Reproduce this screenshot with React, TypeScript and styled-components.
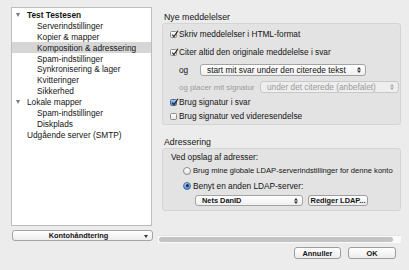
import React from "react";
import styled, { createGlobalStyle } from "styled-components";

const GlobalStyle = createGlobalStyle`
  html, body {
    margin: 0;
    padding: 0;
    background: #ececec;
  }
  body {
    font-family: "Liberation Sans", Arial, sans-serif;
    font-size: 8.3px;
    color: #141414;
  }
`;

const Window = styled.div`
  width: 409px;
  height: 270px;
  box-sizing: border-box;
  padding: 7px 0 0 11px;
  display: flex;
  flex-direction: column;
  overflow: hidden;
`;

const Main = styled.div`
  display: flex;
  height: 236px;
  gap: 5px;
`;

const Sidebar = styled.div`
  width: 142px;
  display: flex;
  flex-direction: column;
  gap: 4px;
`;

const ListBox = styled.div`
  width: 141px;
  height: 219px;
  box-sizing: border-box;
  background: #fff;
  border: 1px solid #bdbdbd;
  padding-top: 1.5px;
`;

const ListRow = styled.div<{ $level: number; $selected?: boolean; $bold?: boolean }>`
  height: 10.9px;
  display: flex;
  align-items: center;
  padding-left: ${(p) => 4 + p.$level * 10}px;
  background: ${(p) => (p.$selected ? "#d6d6d6" : "transparent")};
  font-weight: ${(p) => (p.$bold ? 700 : 400)};
  white-space: nowrap;
`;

const Disclosure = styled.span<{ $open?: boolean }>`
  width: 11px;
  flex: none;
  display: flex;
  align-items: center;
  &::before {
    content: "";
    display: ${(p) => (p.$open ? "block" : "none")};
    border-left: 2.5px solid transparent;
    border-right: 2.5px solid transparent;
    border-top: 4px solid #7a7a7a;
  }
`;

const PopupButton = styled.div`
  margin-left: 1px;
  width: 141px;
  height: 11px;
  box-sizing: border-box;
  border: 1px solid #a3a3a3;
  border-radius: 3px;
  background: linear-gradient(#ffffff, #ededed);
  display: flex;
  align-items: center;
  justify-content: center;
  position: relative;
  font-weight: 700;
  font-size: 7.4px;
  padding-right: 8px;
`;

const DownArrow = styled.span`
  position: absolute;
  right: 4px;
  top: 3.5px;
  border-left: 2.5px solid transparent;
  border-right: 2.5px solid transparent;
  border-top: 3.5px solid #333;
`;

const Content = styled.div`
  width: 243px;
  display: flex;
  flex-direction: column;
  padding-top: 4px;
`;

const Heading = styled.div<{ $gap?: number }>`
  height: 12px;
  display: flex;
  align-items: center;
  padding-left: 6px;
  margin-top: ${(p) => p.$gap ?? 0}px;
  font-size: 8.8px;
`;

const GroupBox = styled.div<{ $pad: number }>`
  margin-left: 4px;
  width: 239px;
  box-sizing: border-box;
  background: #e3e3e3;
  border: 1px solid #d4d4d4;
  border-radius: 3px;
  padding: ${(p) => p.$pad}px 0 ${(p) => p.$pad}px 8px;
`;

const Row = styled.div<{ $h: number; $indent?: number; $gap?: number }>`
  height: ${(p) => p.$h}px;
  display: flex;
  align-items: center;
  padding-left: ${(p) => p.$indent ?? 0}px;
  gap: ${(p) => p.$gap ?? 2}px;
  white-space: nowrap;
`;

const Box = styled.span<{ $blue?: boolean }>`
  position: relative;
  width: 7px;
  height: 7px;
  flex: none;
  box-sizing: border-box;
  border: 1px solid ${(p) => (p.$blue ? "#4a6c9c" : "#8c8c8c")};
  border-radius: 1.5px;
  background: ${(p) =>
    p.$blue ? "linear-gradient(#a8c8f0, #4b86d8)" : "linear-gradient(#ffffff, #e8e8e8)"};
  margin-left: -1px;
  svg {
    position: absolute;
    left: -0.5px;
    top: -2px;
  }
`;

const Radio = styled.span<{ $on?: boolean }>`
  width: 8px;
  height: 8px;
  flex: none;
  box-sizing: border-box;
  border-radius: 50%;
  border: 1px solid ${(p) => (p.$on ? "#4a6c9c" : "#8c8c8c")};
  background: ${(p) =>
    p.$on ? "linear-gradient(#a8c8f0, #4b86d8)" : "linear-gradient(#ffffff, #e6e6e6)"};
  display: flex;
  align-items: center;
  justify-content: center;
  &::after {
    content: "";
    display: ${(p) => (p.$on ? "block" : "none")};
    width: 3px;
    height: 3px;
    border-radius: 50%;
    background: #1c2a40;
  }
`;

const Label = styled.span<{ $w?: number; $muted?: boolean; $size?: number }>`
  width: ${(p) => (p.$w ? `${p.$w}px` : "auto")};
  flex: none;
  color: ${(p) => (p.$muted ? "#9b9b9b" : "inherit")};
  font-size: ${(p) => (p.$size ? `${p.$size}px` : "inherit")};
`;

const Select = styled.div<{ $w: number; $h?: number; $disabled?: boolean; $bold?: boolean }>`
  position: relative;
  width: ${(p) => p.$w}px;
  height: ${(p) => p.$h ?? 12}px;
  flex: none;
  box-sizing: border-box;
  border: 1px solid ${(p) => (p.$disabled ? "#c9c9c9" : "#a3a3a3")};
  border-radius: 3px;
  background: ${(p) => (p.$disabled ? "#eeeeee" : "linear-gradient(#ffffff, #f0f0f0)")};
  color: ${(p) => (p.$disabled ? "#9b9b9b" : "inherit")};
  font-weight: ${(p) => (p.$bold ? 700 : 400)};
  font-size: ${(p) => (p.$bold ? "7.4px" : "inherit")};
  display: flex;
  align-items: center;
  padding-left: 6px;
  svg {
    position: absolute;
    right: 4px;
    top: 50%;
    transform: translateY(-50%);
  }
`;

const PushButton = styled.div<{ $w: number; $h?: number }>`
  width: ${(p) => p.$w}px;
  height: ${(p) => p.$h ?? 12}px;
  flex: none;
  box-sizing: border-box;
  border: 1px solid #9d9d9d;
  border-radius: 3px;
  background: linear-gradient(#ffffff, #ececec);
  display: flex;
  align-items: center;
  justify-content: center;
  font-weight: 700;
  font-size: 7.4px;
`;

const Track = styled.div`
  margin-top: auto;
  height: 8px;
  background: #fafafa;
  border-top: 1px solid #e2e2e2;
  box-sizing: border-box;
  padding: 1px 8px 1px 1px;
`;

const Thumb = styled.div`
  height: 100%;
  border-radius: 3px;
  background: #c3c3c3;
`;

const Footer = styled.div`
  display: flex;
  justify-content: flex-end;
  gap: 7px;
  padding-right: 13px;
  margin-top: 4px;
`;

const Check = ({ blue }: { blue?: boolean }) => (
  <Box $blue={blue}>
    <svg width="8" height="8" viewBox="0 0 8 8">
      <path d="M1.3 4.6 L3 6.6 L7 0.8" fill="none" stroke="#1a1a1a" strokeWidth="1.1" />
    </svg>
  </Box>
);

const EmptyBox = () => <Box />;

const Arrows = ({ muted }: { muted?: boolean }) => (
  <svg width="4" height="6" viewBox="0 0 4 6">
    <path d="M0 2.4 L2 0 L4 2.4 Z M0 3.6 L2 6 L4 3.6 Z" fill={muted ? "#a8a8a8" : "#333"} />
  </svg>
);

const accounts = [
  { label: "Test Testesen", level: 0, open: true, bold: true },
  { label: "Serverindstillinger", level: 1 },
  { label: "Kopier & mapper", level: 1 },
  { label: "Komposition & adressering", level: 1, selected: true },
  { label: "Spam-indstillinger", level: 1 },
  { label: "Synkronisering & lager", level: 1 },
  { label: "Kvitteringer", level: 1 },
  { label: "Sikkerhed", level: 1 },
  { label: "Lokale mapper", level: 0, open: true },
  { label: "Spam-indstillinger", level: 1 },
  { label: "Diskplads", level: 1 },
  { label: "Udgående server (SMTP)", level: 0 },
];

export default function App() {
  return (
    <>
      <GlobalStyle />
      <Window>
        <Main>
          <Sidebar>
            <ListBox>
              {accounts.map((a, i) => (
                <ListRow key={i} $level={a.level} $selected={a.selected} $bold={a.bold}>
                  <Disclosure $open={a.open} />
                  {a.label}
                </ListRow>
              ))}
            </ListBox>
            <PopupButton>
              Kontohåndtering
              <DownArrow />
            </PopupButton>
          </Sidebar>

          <Content>
            <Heading>Nye meddelelser</Heading>
            <GroupBox $pad={1}>
              <Row $h={18}>
                <Check />
                <Label>Skriv meddelelser i HTML-format</Label>
              </Row>
              <Row $h={18}>
                <Check />
                <Label>Citer altid den originale meddelelse i svar</Label>
              </Row>
              <Row $h={18} $indent={8}>
                <Label $w={19}>og</Label>
                <Select $w={166}>
                  start mit svar under den citerede tekst
                  <Arrows />
                </Select>
              </Row>
              <Row $h={16} $indent={8} $gap={3}>
                <Label $w={78} $muted $size={7.9}>og placer mit signatur</Label>
                <Select $w={139} $disabled>
                  under det citerede (anbefalet)
                  <Arrows muted />
                </Select>
              </Row>
              <Row $h={14}>
                <Check blue />
                <Label>Brug signatur i svar</Label>
              </Row>
              <Row $h={14}>
                <EmptyBox />
                <Label>Brug signatur ved videresendelse</Label>
              </Row>
            </GroupBox>

            <Heading $gap={11}>Adressering</Heading>
            <GroupBox $pad={2}>
              <Row $h={12}>
                <Label>Ved opslag af adresser:</Label>
              </Row>
              <Row $h={15} $indent={12}>
                <Radio />
                <Label $size={7.6}>Brug mine globale LDAP-serverindstillinger for denne konto</Label>
              </Row>
              <Row $h={15} $indent={12}>
                <Radio $on />
                <Label>Benyt en anden LDAP-server:</Label>
              </Row>
              <Row $h={15} $indent={24} $gap={5}>
                <Select $w={108} $h={11} $bold>
                  Nets DanID
                  <Arrows />
                </Select>
                <PushButton $w={60} $h={11}>Rediger LDAP...</PushButton>
              </Row>
            </GroupBox>

            <Track>
              <Thumb />
            </Track>
          </Content>
        </Main>

        <Footer>
          <PushButton $w={47}>Annuller</PushButton>
          <PushButton $w={48}>OK</PushButton>
        </Footer>
      </Window>
    </>
  );
}
